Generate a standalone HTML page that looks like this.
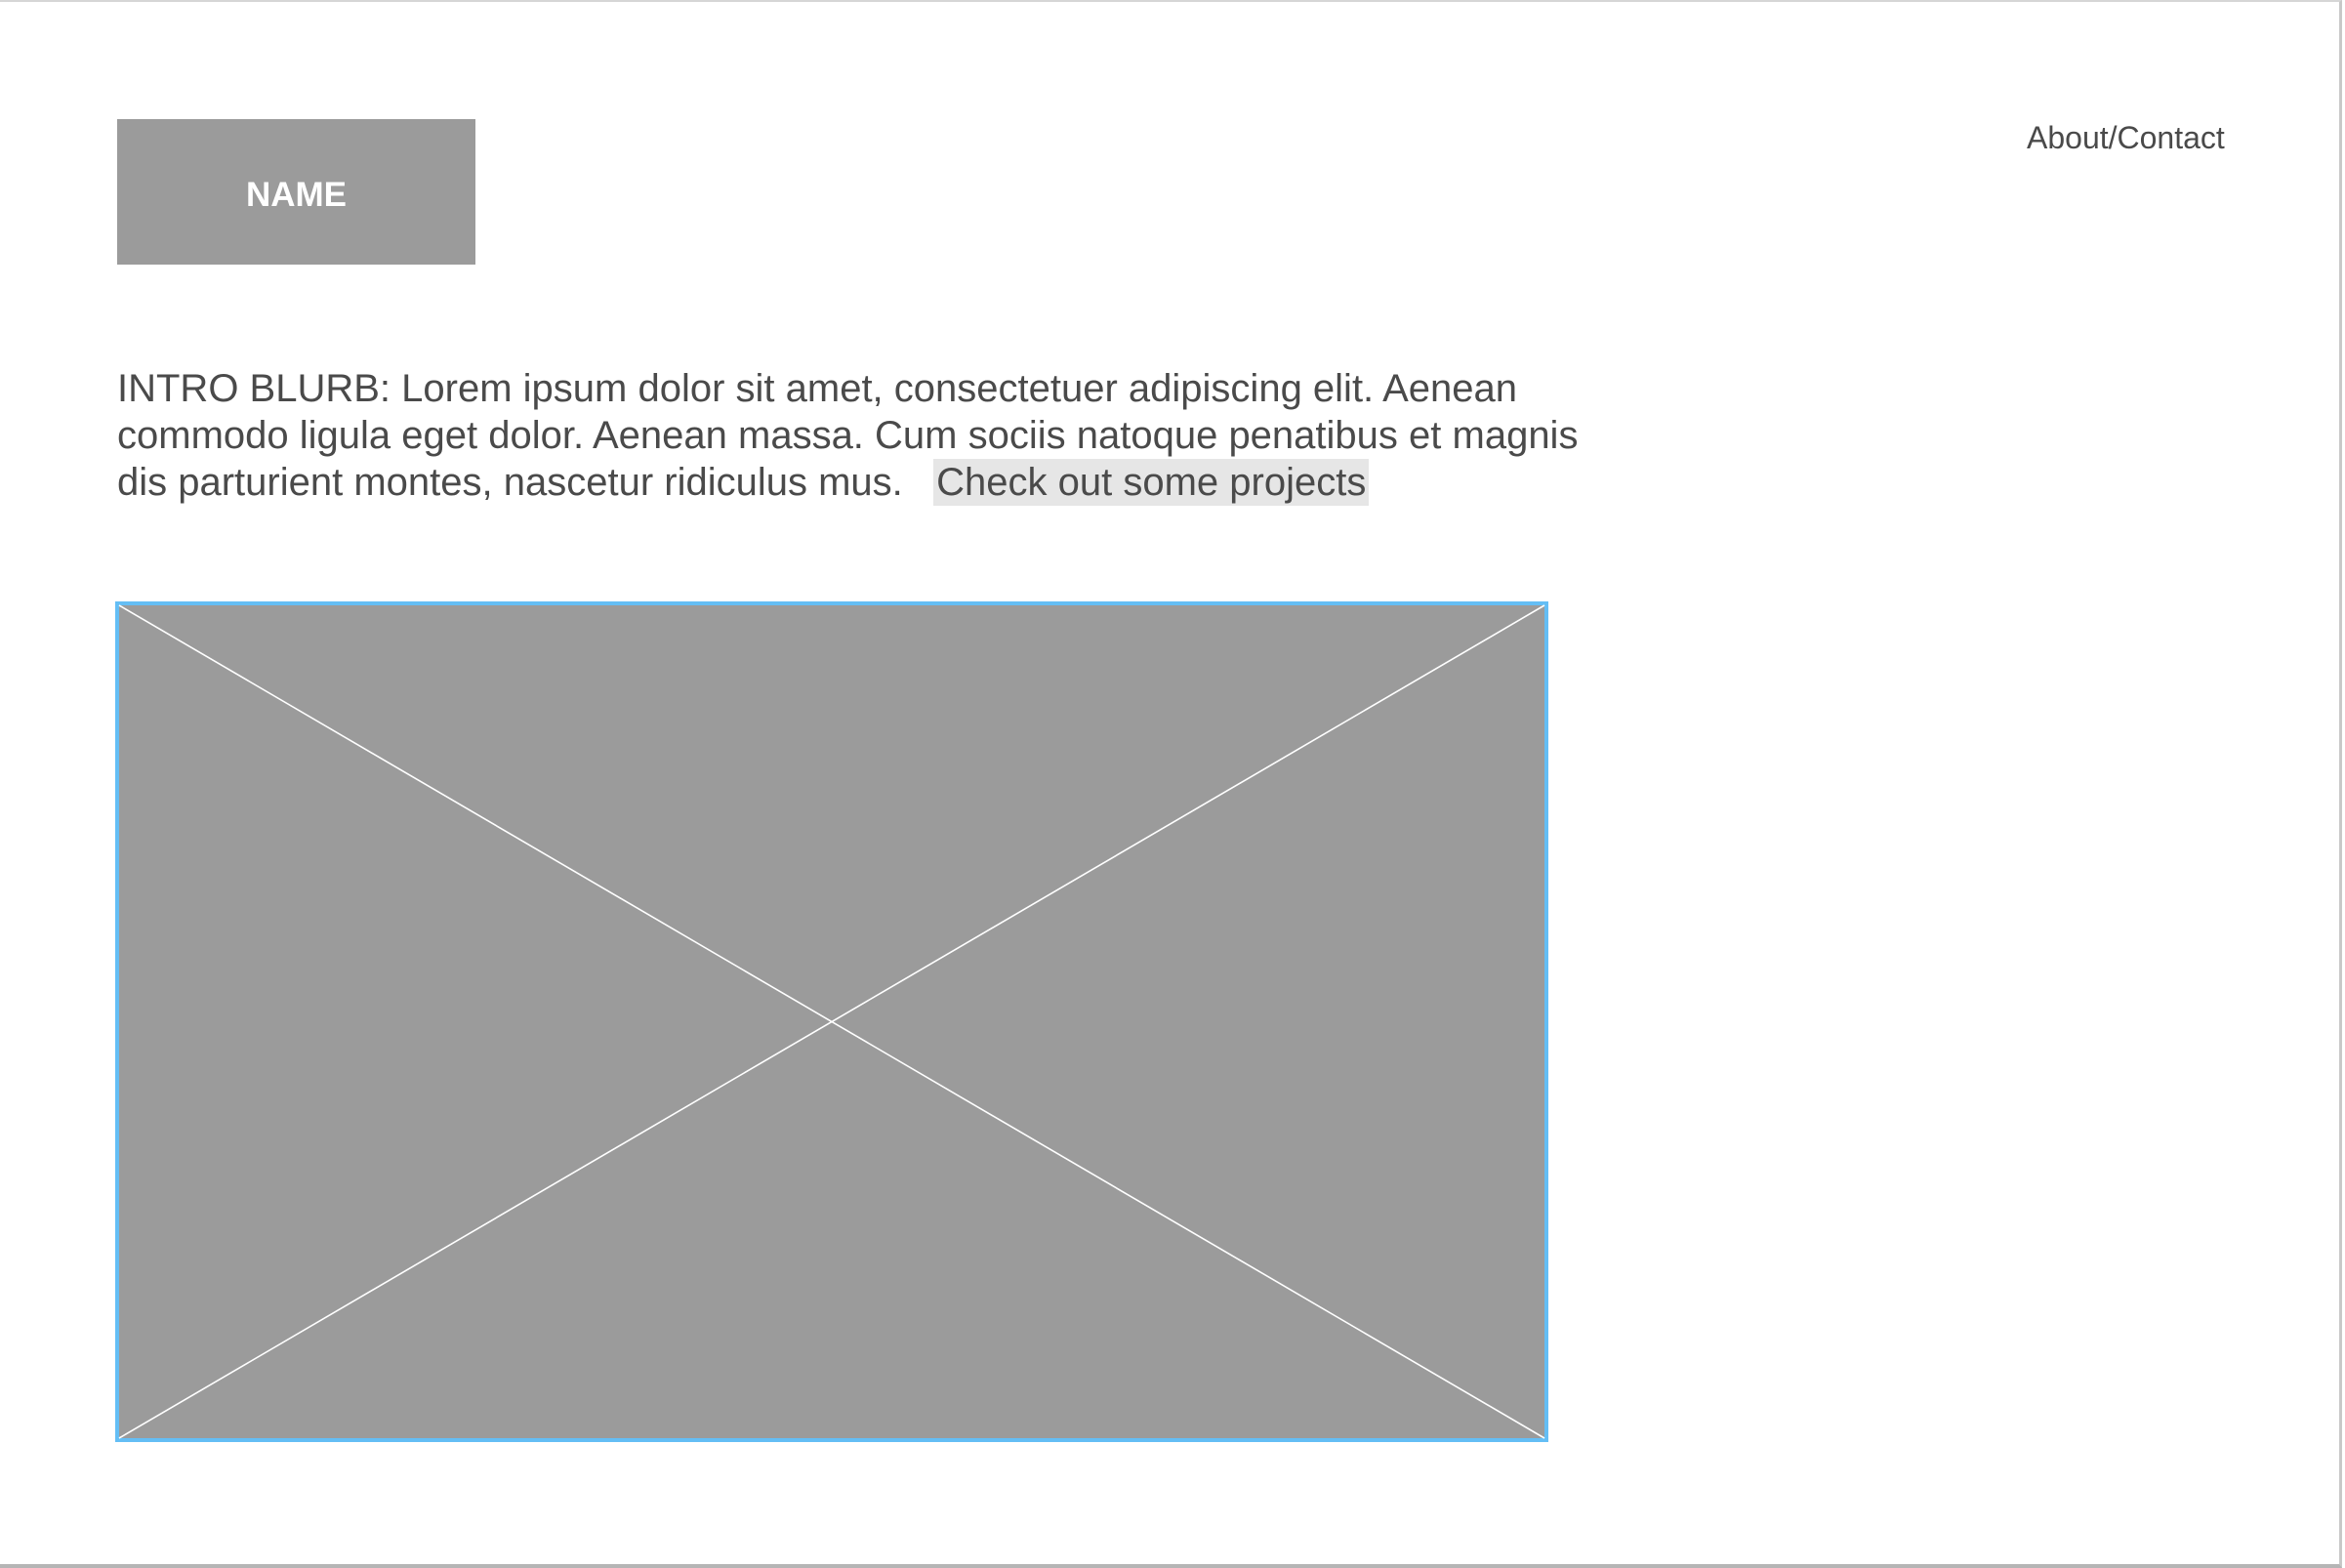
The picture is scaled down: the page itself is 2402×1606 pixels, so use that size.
<!DOCTYPE html>
<html><head><meta charset="utf-8"><style>
html,body{margin:0;padding:0;}
body{width:2402px;height:1606px;position:relative;background:#fff;overflow:hidden;font-family:"Liberation Sans",Arial,sans-serif;color:#4a4a4a;}
.frame{position:absolute;left:0;top:0;width:2399px;height:1606px;border-top:2px solid #d6d6d6;border-right:3px solid #c8c8c8;border-bottom:4px solid #b5b5b5;box-sizing:border-box;}
.name{position:absolute;left:120px;top:122px;width:367px;height:149px;background:#9b9b9b;color:#fff;font-weight:bold;font-size:35px;line-height:155px;text-align:center;}
.nav{position:absolute;left:2076px;top:121px;font-size:32px;line-height:40px;color:#4a4a4a;}
.intro{position:absolute;left:120px;top:374px;width:1700px;font-size:40px;line-height:48px;white-space:nowrap;}
.hl{background:#e6e6e6;padding:2px 3px 2px 3px;margin-left:-2px;}
.img{position:absolute;left:118px;top:616px;width:1468px;height:861px;}
</style></head><body>
<div class="frame"></div>
<div class="name">NAME</div>
<div class="nav">About/Contact</div>
<div class="intro">INTRO BLURB: Lorem ipsum dolor sit amet, consectetuer adipiscing elit. Aenean<br>commodo ligula eget dolor. Aenean massa. Cum sociis natoque penatibus et magnis<br>dis parturient montes, nascetur ridiculus mus. &nbsp; <span class="hl">Check out some projects</span></div>
<svg class="img" width="1468" height="861" viewBox="0 0 1468 861">
<rect x="2" y="2" width="1464" height="857" fill="#9b9b9b" stroke="#64bef5" stroke-width="4"/>
<line x1="4" y1="4" x2="1464" y2="857" stroke="#fff" stroke-width="1.6"/>
<line x1="1464" y1="4" x2="4" y2="857" stroke="#fff" stroke-width="1.6"/>
</svg>
</body></html>
